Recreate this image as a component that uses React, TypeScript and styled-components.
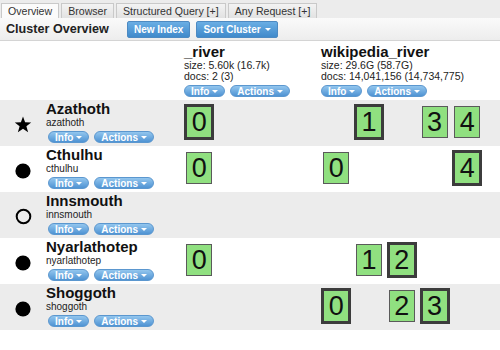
import React from "react";
import styled, { createGlobalStyle } from "styled-components";

const GlobalStyle = createGlobalStyle`
  html, body { margin: 0; padding: 0; background: #fff; }
  body { font-family: "Liberation Sans", Arial, sans-serif; color: #222; }
`;

const Page = styled.div`
  width: 500px;
  height: 350px;
  overflow: hidden;
  background: #fff;
`;

const TabBar = styled.div`
  display: flex;
  align-items: flex-end;
  gap: 2px;
  height: 18px;
  padding-left: 1px;
  background: #ececec;
  box-sizing: border-box;
`;

const Tab = styled.div<{ $active?: boolean }>`
  height: 15px;
  box-sizing: border-box;
  padding: 0 6px;
  display: flex;
  align-items: center;
  font-size: 10.6px;
  color: #333;
  border: 1px solid #c9c9c9;
  border-bottom: none;
  background: ${(p) => (p.$active ? "#fbfbfb" : "linear-gradient(#f3f3f3, #e2e2e2)")};
`;

const Header = styled.div`
  display: flex;
  align-items: center;
  height: 23px;
  box-sizing: border-box;
  padding: 0 6px;
  background: linear-gradient(#fafafa, #ededed);
  border-bottom: 1px solid #d4d4d4;
`;

const Title = styled.div`
  font-size: 12.6px;
  font-weight: bold;
  color: #222;
  margin-right: 18px;
`;

const ToolButton = styled.div`
  height: 17px;
  box-sizing: border-box;
  padding: 0 6px;
  margin-right: 6px;
  display: flex;
  align-items: center;
  gap: 4px;
  font-size: 10px;
  font-weight: bold;
  color: #fff;
  border-radius: 2px;
  border: 1px solid #4d8ac2;
  background: linear-gradient(#6aaee4, #408acb);
`;

const Caret = styled.span`
  display: inline-block;
  width: 0;
  height: 0;
  border-left: 3px solid transparent;
  border-right: 3px solid transparent;
  border-top: 3px solid #fff;
  margin-top: 1px;
`;

const Row = styled.div<{ $alt?: boolean; $height: number }>`
  display: grid;
  grid-template-columns: 183px 137px 1fr;
  height: ${(p) => p.$height}px;
  background: ${(p) => (p.$alt ? "#ececec" : "#fff")};
`;

const IndexHead = styled.div`
  display: flex;
  flex-direction: column;
  padding-top: 3px;
  padding-left: 1px;
`;

const IndexName = styled.div`
  font-size: 15px;
  font-weight: bold;
  line-height: 16px;
  color: #111;
`;

const InfoLine = styled.div`
  font-size: 10.5px;
  line-height: 11px;
  color: #222;
`;

const PillGroup = styled.div`
  display: flex;
  gap: 5px;
  margin-top: 3px;
`;

const Pill = styled.div`
  height: 12px;
  box-sizing: border-box;
  padding: 0 6px;
  display: flex;
  align-items: center;
  gap: 3px;
  font-size: 10px;
  font-weight: bold;
  color: #fff;
  border-radius: 6px;
  border: 1px solid #5b97cf;
  background: linear-gradient(#93c6ee, #4f93d3);
`;

const NodeCell = styled.div`
  display: flex;
`;

const IconBox = styled.div`
  width: 46px;
  display: flex;
  justify-content: center;
  padding-top: 16px;
  box-sizing: border-box;
`;

const NodeInfo = styled.div`
  display: flex;
  flex-direction: column;
  padding-top: 1px;
`;

const NodeName = styled.div`
  font-size: 15px;
  font-weight: bold;
  line-height: 16px;
  color: #111;
`;

const NodeSub = styled.div`
  font-size: 10px;
  line-height: 11px;
  color: #222;
`;

const NodePills = styled(PillGroup)`
  margin-top: 3px;
  padding-left: 2px;
`;

const ShardCell = styled.div`
  display: flex;
  align-items: center;
  padding-bottom: 2px;
`;

const Slot = styled.div`
  width: 32.75px;
  display: flex;
  justify-content: center;
`;

const Shard = styled.div<{ $primary?: boolean }>`
  width: 24px;
  height: 30px;
  display: flex;
  align-items: center;
  justify-content: center;
  background: #90e080;
  border: ${(p) => (p.$primary ? "3px solid #3c3c3c" : "1px solid #5a5a5a")};
  font-size: 27px;
  color: #111;
  line-height: 1;
`;

type ShardSpec = { n: number; p: boolean };
type Kind = "star" | "dot" | "ring";
type NodeSpec = {
  name: string;
  id: string;
  kind: Kind;
  river: ShardSpec[];
  wiki: ShardSpec[];
};

const nodes: NodeSpec[] = [
  { name: "Azathoth", id: "azathoth", kind: "star", river: [{ n: 0, p: true }], wiki: [{ n: 1, p: true }, { n: 3, p: false }, { n: 4, p: false }] },
  { name: "Cthulhu", id: "cthulhu", kind: "dot", river: [{ n: 0, p: false }], wiki: [{ n: 0, p: false }, { n: 4, p: true }] },
  { name: "Innsmouth", id: "innsmouth", kind: "ring", river: [], wiki: [] },
  { name: "Nyarlathotep", id: "nyarlathotep", kind: "dot", river: [{ n: 0, p: false }], wiki: [{ n: 1, p: false }, { n: 2, p: true }] },
  { name: "Shoggoth", id: "shoggoth", kind: "dot", river: [], wiki: [{ n: 0, p: true }, { n: 2, p: false }, { n: 3, p: true }] },
];

const NodeIcon = ({ kind }: { kind: Kind }) => {
  if (kind === "star") {
    return (
      <svg width="18" height="17" viewBox="0 0 18 17">
        <polygon points="9,0.5 11.1,6.2 17.2,6.4 12.4,10.2 14.1,16.2 9,12.7 3.9,16.2 5.6,10.2 0.8,6.4 6.9,6.2" fill="#000" />
      </svg>
    );
  }
  if (kind === "ring") {
    return (
      <svg width="17" height="17" viewBox="0 0 17 17">
        <circle cx="8.5" cy="8.5" r="6.8" fill="none" stroke="#000" strokeWidth="2" />
      </svg>
    );
  }
  return (
    <svg width="17" height="17" viewBox="0 0 17 17">
      <circle cx="8" cy="9" r="7.6" fill="#000" />
    </svg>
  );
};

const Shards = ({ list, slots }: { list: ShardSpec[]; slots: number }) => (
  <ShardCell>
    {Array.from({ length: slots }).map((_, i) => {
      const s = list.find((x) => x.n === i);
      return <Slot key={i}>{s ? <Shard $primary={s.p}>{s.n}</Shard> : null}</Slot>;
    })}
  </ShardCell>
);

const Buttons = () => (
  <>
    <Pill>
      Info <Caret />
    </Pill>
    <Pill>
      Actions <Caret />
    </Pill>
  </>
);

export default function App() {
  return (
    <Page>
      <GlobalStyle />
      <TabBar>
        <Tab $active>Overview</Tab>
        <Tab>Browser</Tab>
        <Tab>Structured Query [+]</Tab>
        <Tab>Any Request [+]</Tab>
      </TabBar>
      <Header>
        <Title>Cluster Overview</Title>
        <ToolButton>New Index</ToolButton>
        <ToolButton>
          Sort Cluster <Caret />
        </ToolButton>
      </Header>
      <Row $height={59}>
        <div />
        <IndexHead>
          <IndexName>_river</IndexName>
          <InfoLine>size: 5.60k (16.7k)</InfoLine>
          <InfoLine>docs: 2 (3)</InfoLine>
          <PillGroup>
            <Buttons />
          </PillGroup>
        </IndexHead>
        <IndexHead>
          <IndexName>wikipedia_river</IndexName>
          <InfoLine>size: 29.6G (58.7G)</InfoLine>
          <InfoLine>docs: 14,041,156 (14,734,775)</InfoLine>
          <PillGroup>
            <Buttons />
          </PillGroup>
        </IndexHead>
      </Row>
      {nodes.map((n, i) => (
        <Row key={n.id} $alt={i % 2 === 0} $height={46}>
          <NodeCell>
            <IconBox>
              <NodeIcon kind={n.kind} />
            </IconBox>
            <NodeInfo>
              <NodeName>{n.name}</NodeName>
              <NodeSub>{n.id}</NodeSub>
              <NodePills>
                <Buttons />
              </NodePills>
            </NodeInfo>
          </NodeCell>
          <Shards list={n.river} slots={1} />
          <Shards list={n.wiki} slots={5} />
        </Row>
      ))}
    </Page>
  );
}
